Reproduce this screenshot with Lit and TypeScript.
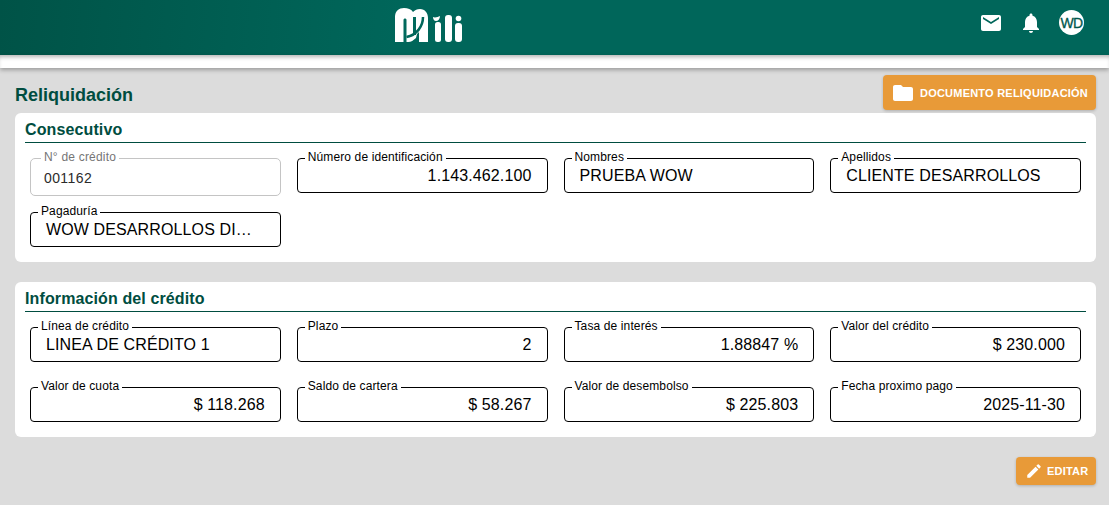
import { LitElement, html, css } from "lit";
import { customElement } from "lit/decorators.js";

type F = { label: string; value: string; align?: "right"; disabled?: boolean };

const first: F[] = [
  { label: "N° de crédito", value: "001162", disabled: true },
  { label: "Número de identificación", value: "1.143.462.100", align: "right" },
  { label: "Nombres", value: "PRUEBA WOW" },
  { label: "Apellidos", value: "CLIENTE DESARROLLOS" },
  { label: "Pagaduría", value: "WOW DESARROLLOS DI…" },
];
const second: F[] = [
  { label: "Línea de crédito", value: "LINEA DE CRÉDITO 1" },
  { label: "Plazo", value: "2", align: "right" },
  { label: "Tasa de interés", value: "1.88847 %", align: "right" },
  { label: "Valor del crédito", value: "$ 230.000", align: "right" },
  { label: "Valor de cuota", value: "$ 118.268", align: "right" },
  { label: "Saldo de cartera", value: "$ 58.267", align: "right" },
  { label: "Valor de desembolso", value: "$ 225.803", align: "right" },
  { label: "Fecha proximo pago", value: "2025-11-30", align: "right" },
];

@customElement("app-root")
export class AppRoot extends LitElement {
  static styles = css`
    :host { display: block; width: 1109px; height: 505px; overflow: hidden; background: #dcdcdc; font-family: "Liberation Sans", Arial, sans-serif; color: #000; }
    .top { height: 55px; box-sizing: border-box; background: linear-gradient(95deg, #00524700 0%, #005347 0%, #00665a 36%, #00665a 100%); display: flex; padding: 7px 25px 0 393px; }
    .logo { display: block; }
    .icons { margin-left: auto; display: flex; align-items: center; gap: 16px; height: 31px; }
    .icons svg { display: block; }
    .avatar { width: 25px; height: 25px; border-radius: 50%; background: #fff; color: #00574d; font-size: 14px; font-weight: 400; -webkit-text-stroke: .3px #00574d; display: flex; align-items: center; justify-content: center; letter-spacing: -0.6px; }
    .strip { height: 13px; background: #fff; box-shadow: 0 2px 4px rgba(0,0,0,.3), inset 0 4px 4px -2px rgba(0,0,0,.3); }
    main { padding: 7px 13px 0 15px; }
    .head { display: flex; justify-content: space-between; align-items: flex-start; height: 38px; }
    h1 { margin: 10px 0 0; font-size: 18px; line-height: 21px; font-weight: 700; color: #004d40; }
    .btn { display: flex; align-items: center; background: #e89a38; color: #fff; border-radius: 4px; font-size: 11px; font-weight: 700; letter-spacing: .22px; box-shadow: 0 1px 3px rgba(0,0,0,.2); }
    .doc { width: 213px; height: 35px; box-sizing: border-box; padding-left: 8px; gap: 5px; }
    .card { background: #fff; border-radius: 6px; padding: 8px 10px 15px 10px; margin-bottom: 20px; }
    h2 { margin: 0; font-size: 16px; line-height: 18px; font-weight: 700; letter-spacing: .12px; color: #004d40; border-bottom: 1px solid #004d40; padding-bottom: 3px; }
    .grid { display: grid; grid-template-columns: repeat(4, 1fr); column-gap: 16px; align-items: start; margin: 15px 5px 0 5px; }
    .one { row-gap: 16px; }
    .two { row-gap: 25px; }
    .field { position: relative; height: 35px; box-sizing: border-box; border: 1px solid #000; border-radius: 4px; display: flex; align-items: center; padding: 0 15px; font-size: 16px; letter-spacing: .12px; }
    .field.right { justify-content: flex-end; }
    .field label { position: absolute; left: 7px; top: -8px; padding: 0 3px; background: linear-gradient(#fff0 0 7px, #fff 7px 10px, #fff0 10px); font-size: 12px; line-height: 13px; letter-spacing: .12px; white-space: nowrap; }
    .field.dis { height: 38px; border-color: #c4c4c4; border-radius: 5px; padding-left: 13px; font-size: 14px; letter-spacing: .4px; color: #2b2b2b; padding-top: 2px; }
    .field.dis label { left: 10px; color: #757575; letter-spacing: .2px; }
    .foot { display: flex; justify-content: flex-end; }
    .edit { width: 80px; height: 28px; box-sizing: border-box; padding-left: 9px; gap: 4px; }
  `;

  private field(f: F) {
    const cls = `field ${f.align === "right" ? "right" : ""} ${f.disabled ? "dis" : ""}`;
    return html`<div class=${cls}><label>${f.label}</label><span>${f.value}</span></div>`;
  }

  render() {
    return html`
      <div class="top">
        <svg class="logo" width="72" height="37" viewBox="0 0 72 37" fill="#fff">
          <path d="M2 35V10C2 4 6 1 11 1c4 0 7 1 9 4 2-2 4-3 7-3 5 0 8 4 8 9v24H25V29L20 33l-5 2H2z" />
          <path d="M10.500 35V13c0-2 3-2 3 0v22z" fill="#00695c" />
          <path d="M20 10h3v18h-3z" fill="#00695c" />
          <path d="M30 10c0 9-6 18-16.500 20" fill="none" stroke="#00665a" stroke-width="2.500" />
          <path d="M14.500 35c0-3 3-5 6-5l4-2c0 4-4 7-10 7z" />
          <path d="M24 27l2-2v10h-8l5-4z" fill="#00665a" />
          <rect x="42" y="15" width="6" height="20" rx="2.500" />
          <rect x="52" y="8" width="7" height="27" rx="3" />
          <rect x="62" y="16" width="7" height="19" rx="3" />
          <circle cx="65.500" cy="11.500" r="2.800" />
          <path d="M40 10c2 1 5 0 7-1 0 3-2 5-4 5s-3-2-3-4z" />
        </svg>
        <div class="icons">
          <svg width="24" height="24" viewBox="0 0 24 24" fill="#fff"><path d="M20 4H4c-1.100 0-2 .9-2 2v12c0 1.100.9 2 2 2h16c1.100 0 2-.9 2-2V6c0-1.100-.9-2-2-2zm0 4-8 5-8-5V6l8 5 8-5v2z"/></svg>
          <svg width="24" height="24" viewBox="0 0 24 24" fill="#fff"><path d="M12 22c1.100 0 2-.9 2-2h-4c0 1.100.9 2 2 2zm6-6v-5c0-3.070-1.630-5.640-4.500-6.320V4c0-.83-.67-1.500-1.500-1.500s-1.500.67-1.500 1.500v.68C7.640 5.360 6 7.920 6 11v5l-2 2v1h16v-1l-2-2z"/></svg>
          <div class="avatar">WD</div>
        </div>
      </div>
      <div class="strip"></div>
      <main>
        <div class="head">
          <h1>Reliquidación</h1>
          <div class="btn doc">
            <svg width="24" height="24" viewBox="0 0 24 24" fill="#fff"><path d="M10 4H4c-1.100 0-1.990.9-1.990 2L2 18c0 1.100.9 2 2 2h16c1.100 0 2-.9 2-2V8c0-1.100-.9-2-2-2h-8l-2-2z"/></svg>
            <span>DOCUMENTO RELIQUIDACIÓN</span>
          </div>
        </div>
        <section class="card">
          <h2>Consecutivo</h2>
          <div class="grid one">${first.map((f) => this.field(f))}</div>
        </section>
        <section class="card">
          <h2>Información del crédito</h2>
          <div class="grid two">${second.map((f) => this.field(f))}</div>
        </section>
        <div class="foot">
          <div class="btn edit">
            <svg width="18" height="18" viewBox="0 0 24 24" fill="#fff"><path d="M3 17.250V21h3.750L17.810 9.940l-3.750-3.750L3 17.250zM20.710 7.040a1 1 0 0 0 0-1.410l-2.340-2.340a1 1 0 0 0-1.410 0l-1.830 1.830 3.750 3.750 1.830-1.830z"/></svg>
            <span>EDITAR</span>
          </div>
        </div>
      </main>
    `;
  }
}
